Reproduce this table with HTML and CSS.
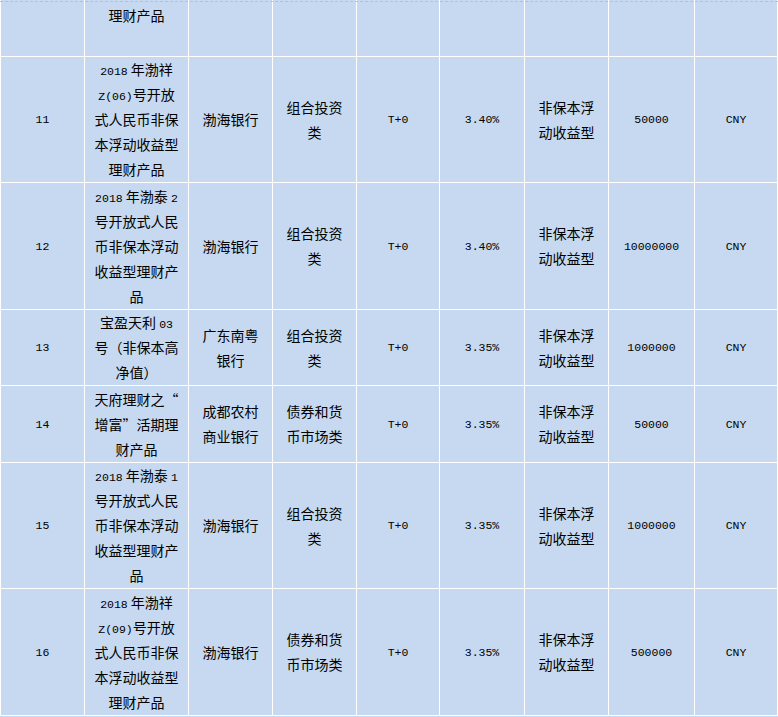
FILE: index.html
```html
<!DOCTYPE html>
<html lang="zh-CN">
<head>
<meta charset="utf-8">
<title>理财产品列表</title>
<link rel="stylesheet" href="styles.css">
</head>
<body>
<div class="sheet">
<table class="grid">
<colgroup>
<col class="c-idx"><col class="c-name"><col class="c-bank"><col class="c-type"><col class="c-t"><col class="c-rate"><col class="c-kind"><col class="c-amt"><col class="c-cur">
</colgroup>
<tbody>
<tr class="r-cut">
<td></td><td class="top">理财产品</td><td></td><td></td><td></td><td></td><td></td><td></td><td></td>
</tr>
<tr class="r5">
<td class="num">11</td>
<td><span class="num">2018</span> 年渤祥<br><span class="num">Z(06)</span>号开放<br>式人民币非保<br>本浮动收益型<br>理财产品</td>
<td>渤海银行</td>
<td>组合投资<br>类</td>
<td class="num">T+0</td>
<td class="num">3.40%</td>
<td>非保本浮<br>动收益型</td>
<td class="num">50000</td>
<td class="num">CNY</td>
</tr>
<tr class="r5b">
<td class="num">12</td>
<td><span class="num">2018</span> 年渤泰 <span class="num">2</span><br>号开放式人民<br>币非保本浮动<br>收益型理财产<br>品</td>
<td>渤海银行</td>
<td>组合投资<br>类</td>
<td class="num">T+0</td>
<td class="num">3.40%</td>
<td>非保本浮<br>动收益型</td>
<td class="num">10000000</td>
<td class="num">CNY</td>
</tr>
<tr class="r3">
<td class="num">13</td>
<td>宝盈天利 <span class="num">03</span><br>号（非保本高<br>净值）</td>
<td>广东南粤<br>银行</td>
<td>组合投资<br>类</td>
<td class="num">T+0</td>
<td class="num">3.35%</td>
<td>非保本浮<br>动收益型</td>
<td class="num">1000000</td>
<td class="num">CNY</td>
</tr>
<tr class="r3b">
<td class="num">14</td>
<td>天府理财之“<br>增富”活期理<br>财产品</td>
<td>成都农村<br>商业银行</td>
<td>债券和货<br>币市场类</td>
<td class="num">T+0</td>
<td class="num">3.35%</td>
<td>非保本浮<br>动收益型</td>
<td class="num">50000</td>
<td class="num">CNY</td>
</tr>
<tr class="r5">
<td class="num">15</td>
<td><span class="num">2018</span> 年渤泰 <span class="num">1</span><br>号开放式人民<br>币非保本浮动<br>收益型理财产<br>品</td>
<td>渤海银行</td>
<td>组合投资<br>类</td>
<td class="num">T+0</td>
<td class="num">3.35%</td>
<td>非保本浮<br>动收益型</td>
<td class="num">1000000</td>
<td class="num">CNY</td>
</tr>
<tr class="r5b">
<td class="num">16</td>
<td><span class="num">2018</span> 年渤祥<br><span class="num">Z(09)</span>号开放<br>式人民币非保<br>本浮动收益型<br>理财产品</td>
<td>渤海银行</td>
<td>债券和货<br>币市场类</td>
<td class="num">T+0</td>
<td class="num">3.35%</td>
<td>非保本浮<br>动收益型</td>
<td class="num">500000</td>
<td class="num">CNY</td>
</tr>
</tbody>
</table>
</div>
</body>
</html>
```
FILE: styles.css
```css
html, body {
  margin: 0;
  padding: 0;
  overflow: hidden;
  background: #c6d9f0;
}

body {
  font-family: "Noto Sans CJK SC", "Noto Sans", sans-serif;
  font-size: 14px;
  color: #000;
}

.sheet {
  position: relative;
  width: 778px;
  height: 717px;
  overflow: hidden;
}

.sheet::before {
  content: "";
  position: absolute;
  top: 1px;
  left: 0;
  right: 0;
  border-top: 1px dashed #b9c2cc;
  z-index: 2;
}

.grid {
  table-layout: fixed;
  width: 778px;
  border-collapse: separate;
  border-spacing: 1px;
  background: #ffffff;
  margin-top: -1px;
}

.c-idx { width: 83px; }
.c-name { width: 103px; }
.c-bank { width: 83px; }
.c-type { width: 83px; }
.c-t { width: 82px; }
.c-rate { width: 84px; }
.c-kind { width: 83px; }
.c-amt { width: 85px; }
.c-cur { width: 82px; }

.grid td {
  box-sizing: border-box;
  background: #c6d9f0;
  padding: 0;
  text-align: center;
  vertical-align: middle;
  line-height: 25px;
  white-space: nowrap;
  overflow: hidden;
}

.grid td.top {
  vertical-align: top;
  padding-top: 3px;
}

.r-cut td { height: 56px; }
.r5 td { height: 125px; }
.r5b td { height: 126px; }
.r3 td { height: 75px; }
.r3b td { height: 76px; }

.num {
  font-family: "Liberation Mono", "DejaVu Sans Mono", monospace;
  font-size: 11.5px;
}

span.num {
  line-height: 1;
}
```
